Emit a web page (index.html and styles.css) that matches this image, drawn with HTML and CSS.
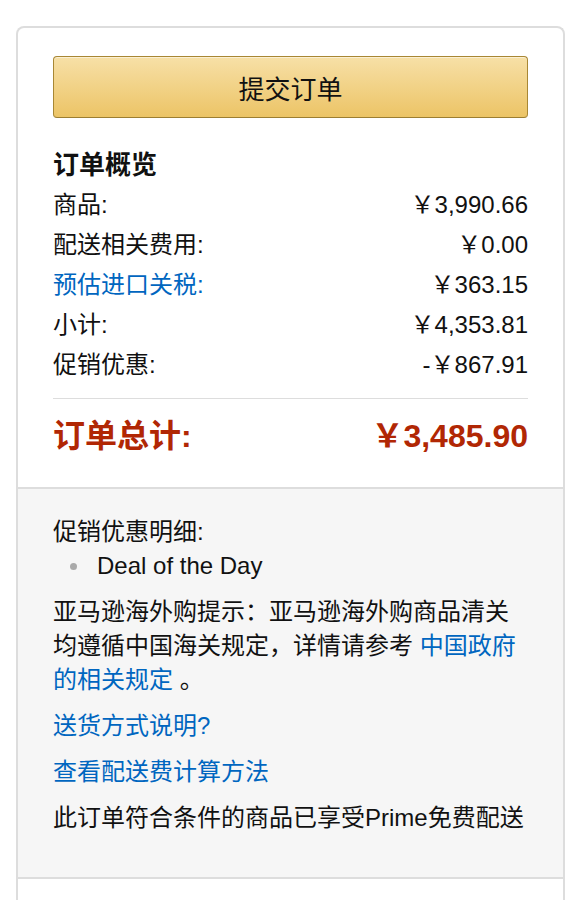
FILE: index.html
```html
<!DOCTYPE html>
<html lang="zh-CN">
<head>
<meta charset="utf-8">
<title>订单概览</title>
<link rel="stylesheet" href="styles.css">
</head>
<body>
<div class="page">
  <div class="card">
    <div class="card-top">
      <button class="submit-btn" type="button">提交订单</button>
      <h2 class="summary-title">订单概览</h2>
      <div class="rows">
        <div class="row"><span>商品:</span><span>￥3,990.66</span></div>
        <div class="row"><span>配送相关费用:</span><span>￥0.00</span></div>
        <div class="row"><a class="link" href="#">预估进口关税:</a><span>￥363.15</span></div>
        <div class="row"><span>小计:</span><span>￥4,353.81</span></div>
        <div class="row"><span>促销优惠:</span><span>-￥867.91</span></div>
      </div>
      <div class="divider"></div>
      <div class="row total"><span>订单总计:</span><span>￥3,485.90</span></div>
    </div>
    <div class="card-info">
      <div class="line">促销优惠明细:</div>
      <ul class="promo-list">
        <li>Deal of the Day</li>
      </ul>
      <p class="notice">亚马逊海外购提示：亚马逊海外购商品清关均遵循中国海关规定，详情请参考 <a class="link" href="#">中国政府的相关规定</a> 。</p>
      <div class="block"><a class="link" href="#">送货方式说明?</a></div>
      <div class="block"><a class="link" href="#">查看配送费计算方法</a></div>
      <div class="block">此订单符合条件的商品已享受Prime免费配送</div>
    </div>
    <div class="card-bottom"></div>
  </div>
</div>
</body>
</html>
```

FILE: styles.css
```css
* {
  box-sizing: border-box;
}

html, body {
  margin: 0;
  padding: 0;
  background: #fff;
}

body {
  font-family: "Liberation Sans", "Noto Sans CJK SC", sans-serif;
  color: #111;
  font-size: 24px;
}

.page {
  padding: 26px 19px 0 16px;
}

.card {
  border: 2px solid #ddd;
  border-bottom: none;
  border-radius: 8px 8px 0 0;
  overflow: hidden;
}

.card-top {
  padding: 28px 35px 31px;
}

.submit-btn {
  display: block;
  width: 100%;
  height: 62px;
  border: 1px solid #a88734;
  border-bottom-color: #9c7e31;
  border-radius: 4px;
  background: linear-gradient(to bottom, #f7e0a7, #ecc466);
  box-shadow: inset 0 1px 0 rgba(255, 255, 255, 0.5);
  font-family: "Liberation Sans", "Noto Sans CJK SC", sans-serif;
  font-size: 26px;
  color: #111;
  padding: 0;
  cursor: pointer;
}

.summary-title {
  margin: 27px 0 0;
  font-size: 26px;
  font-weight: 700;
  line-height: 40px;
}

.row {
  display: flex;
  justify-content: space-between;
  align-items: center;
  line-height: 40px;
  white-space: nowrap;
}

.link {
  color: #0066c0;
  text-decoration: none;
}

.divider {
  margin-top: 13px;
  height: 1px;
  background: #ddd;
}

.total {
  margin-top: 17px;
  font-size: 32px;
  font-weight: 700;
  color: #b12704;
}

.card-info {
  background: #f6f6f6;
  border-top: 2px solid #ddd;
  border-bottom: 2px solid #ddd;
  padding: 26px 35px 42px;
  line-height: 34px;
}

.promo-list {
  list-style: none;
  margin: 0;
  padding: 0;
}

.promo-list li {
  display: flex;
  align-items: center;
}

.promo-list li::before {
  content: "";
  width: 7px;
  height: 7px;
  border-radius: 50%;
  background: #aaa;
  margin-left: 17px;
  margin-right: 20px;
  flex: none;
}

.notice {
  margin: 12px 0 0;
}

.block {
  margin-top: 12px;
}

.card-bottom {
  height: 40px;
  background: #fff;
}
```
